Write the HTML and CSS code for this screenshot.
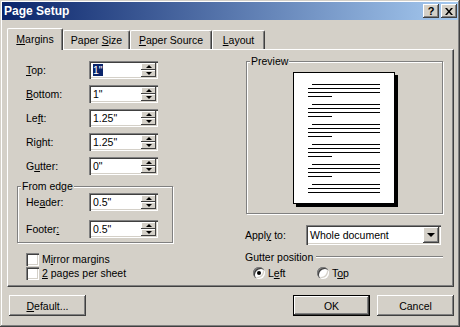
FILE: index.html
```html
<!DOCTYPE html>
<html lang="en">
<head>
  <meta charset="UTF-8">
  <title>Page Setup</title>
  <link rel="stylesheet" href="styles.css">
</head>
<body>
  <div class="window">
    <div class="titlebar">
      <span class="title">Page Setup</span>
      <div class="caption-btns">
        <span class="cbtn help">?</span>
        <span class="cbtn close">
          <svg width="8" height="7" viewBox="0 0 8 7"><path d="M0 0h2l2 2.5L6 0h2L5 3.5 8 7H6L4 4.5 2 7H0l3-3.5z" fill="#000"/></svg>
        </span>
      </div>
    </div>

    <div class="dialog">
      <div class="tabs">
        <div class="tab active"><u>M</u>argins</div>
        <div class="tab t2">Paper <u>S</u>ize</div>
        <div class="tab t3"><u>P</u>aper Source</div>
        <div class="tab t4"><u>L</u>ayout</div>
      </div>

      <div class="panel">
        <div class="col-left">
          <div class="fields">
            <div class="field"><label><u>T</u>op:</label><div class="spin-input"><span class="value"><span class="sel">1"</span></span><div class="spin"><span class="up"></span><span class="down"></span></div></div></div>
            <div class="field"><label><u>B</u>ottom:</label><div class="spin-input"><span class="value">1"</span><div class="spin"><span class="up"></span><span class="down"></span></div></div></div>
            <div class="field"><label>Le<u>f</u>t:</label><div class="spin-input"><span class="value">1.25"</span><div class="spin"><span class="up"></span><span class="down"></span></div></div></div>
            <div class="field"><label>Ri<u>g</u>ht:</label><div class="spin-input"><span class="value">1.25"</span><div class="spin"><span class="up"></span><span class="down"></span></div></div></div>
            <div class="field"><label>G<u>u</u>tter:</label><div class="spin-input"><span class="value">0"</span><div class="spin"><span class="up"></span><span class="down"></span></div></div></div>
          </div>

          <div class="group edge">
            <span class="legend">From edge</span>
            <div class="field"><label>He<u>a</u>der:</label><div class="spin-input"><span class="value">0.5"</span><div class="spin"><span class="up"></span><span class="down"></span></div></div></div>
            <div class="field"><label>Footer<u>:</u></label><div class="spin-input"><span class="value">0.5"</span><div class="spin"><span class="up"></span><span class="down"></span></div></div></div>
          </div>

          <div class="checks">
            <div class="check"><span class="box"></span><span>M<u>i</u>rror margins</span></div>
            <div class="check"><span class="box"></span><span><u>2</u> pages per sheet</span></div>
          </div>
        </div>

        <div class="col-right">
          <div class="group preview">
            <span class="legend">Preview</span>
            <div class="page">
              <div class="para"><div class="ln first"></div><div class="ln"></div><div class="ln"></div><div class="ln short"></div></div>
              <div class="para"><div class="ln first"></div><div class="ln"></div><div class="ln"></div><div class="ln short"></div></div>
              <div class="para"><div class="ln first"></div><div class="ln"></div><div class="ln"></div><div class="ln short"></div></div>
              <div class="para"><div class="ln first"></div><div class="ln"></div><div class="ln"></div><div class="ln short"></div></div>
              <div class="para"><div class="ln first"></div><div class="ln"></div><div class="ln"></div><div class="ln short"></div></div>
              <div class="para"><div class="ln first"></div><div class="ln"></div><div class="ln"></div></div>
            </div>
          </div>

          <div class="apply">
            <label>Appl<u>y</u> to:</label>
            <div class="combo"><span class="combo-text">Whole document</span><span class="drop"></span></div>
          </div>

          <div class="gutter-pos">
            <div class="sep-title"><span>Gutter position</span><span class="sep-line"></span></div>
            <div class="radios">
              <div class="radio"><span class="dot on"></span><span>L<u>e</u>ft</span></div>
              <div class="radio"><span class="dot"></span><span>T<u>o</u>p</span></div>
            </div>
          </div>
        </div>
      </div>

      <div class="footer">
        <div class="btn"><span><u>D</u>efault...</span></div>
        <div class="btn ok">OK</div>
        <div class="btn">Cancel</div>
      </div>
    </div>
  </div>
</body>
</html>
```

FILE: styles.css
```css
* { box-sizing: border-box; }
body { margin: 0; background: #d4d0c8; font-family: "Liberation Sans", Arial, sans-serif; font-size: 10.5px; color: #000; }
u { text-decoration: underline; text-underline-offset: 1px; }

.window { width: 460px; height: 327px; padding: 2px; background: #d4d0c8; box-shadow: inset -1px -1px #404040, inset 1px 1px #d4d0c8, inset -2px -2px #808080, inset 2px 2px #fff; }

.titlebar { height: 18px; display: flex; align-items: center; justify-content: space-between; padding: 0 1px 0 2px; background: linear-gradient(to right, #0a246a, #a6caf0); color: #fff; font-weight: bold; font-size: 12px; }
.caption-btns { display: flex; gap: 2px; }
.cbtn { width: 16px; height: 14px; display: flex; align-items: center; justify-content: center; background: #d4d0c8; color: #000; font-size: 11px; font-weight: bold; box-shadow: inset -1px -1px #404040, inset 1px 1px #fff, inset -2px -2px #808080; }

.dialog { padding: 8px 4px 0 5px; }

.tabs { display: flex; align-items: flex-end; height: 21px; }
.tab { height: 19px; padding-top: 3px; text-align: center; border: 1px solid; border-color: #fff #404040 transparent #fff; border-bottom: 0; border-radius: 2px 2px 0 0; box-shadow: inset -1px 0 #808080; }
.tab.active { position: relative; z-index: 1; width: 56px; height: 22px; margin-bottom: -1px; background: #d4d0c8; padding-top: 4px; }
.t2 { width: 67px; }
.t3 { width: 82px; }
.t4 { width: 53px; }

.panel { height: 238px; display: flex; padding: 11px 10px 0 9px; border: 1px solid; border-color: #fff #404040 #404040 #fff; box-shadow: inset -1px -1px #808080; }

.col-left { width: 156px; }
.fields { display: flex; flex-direction: column; gap: 6px; padding-left: 9px; }
.field { display: flex; align-items: center; height: 18px; }
.field label { width: 63px; }

.spin-input { width: 69px; height: 18px; display: flex; align-items: center; padding: 2px; background: #fff; box-shadow: inset 1px 1px #808080, inset 2px 2px #404040, inset -1px -1px #fff, inset -2px -2px #d4d0c8; }
.value { flex: 1; padding-left: 2px; }
.sel { background: #0a246a; color: #fff; }
.spin { width: 15px; height: 14px; display: flex; flex-direction: column; }
.spin span { flex: 1; display: flex; align-items: center; justify-content: center; background: #d4d0c8; box-shadow: inset -1px -1px #404040, inset 1px 1px #fff; }
.spin .up::after { content: ""; border: 3px solid transparent; border-top: 0; border-bottom: 3px solid #000; }
.spin .down::after { content: ""; border: 3px solid transparent; border-bottom: 0; border-top: 3px solid #000; }

.group { position: relative; border: 1px solid #808080; box-shadow: inset 1px 1px #fff, 1px 1px #fff; }
.legend { position: absolute; top: -7px; left: 3px; padding: 0 1px; background: #d4d0c8; line-height: 12px; }

.edge { margin-top: 11px; padding: 6px 0 4px 8px; display: flex; flex-direction: column; gap: 9px; }

.checks { margin-top: 9px; padding-left: 9px; }
.check { display: flex; align-items: center; height: 14px; }
.box { width: 13px; height: 13px; margin-right: 3px; background: #fff; box-shadow: inset 1px 1px #808080, inset 2px 2px #404040, inset -1px -1px #fff, inset -2px -2px #d4d0c8; }

.col-right { width: 198px; margin-left: auto; }
.preview { margin-left: 1px; height: 153px; padding-top: 10px; }
.page { width: 102px; height: 132px; margin-left: 46px; padding: 11px 0 0 14px; background: #fff; border: 1px solid #000; box-shadow: 3px 3px 0 #000; }
.para { margin-bottom: 7px; }
.ln { width: 72px; height: 1px; background: #000; margin-bottom: 3px; }
.ln:last-child { margin-bottom: 0; }
.ln.first { width: 68px; margin-left: 4px; }
.ln.short { width: 24px; }

.apply { display: flex; align-items: center; margin-top: 11px; }
.apply label { width: 61px; }
.combo { width: 135px; height: 20px; display: flex; align-items: center; padding: 2px; background: #fff; box-shadow: inset 1px 1px #808080, inset 2px 2px #404040, inset -1px -1px #fff, inset -2px -2px #d4d0c8; }
.combo-text { flex: 1; padding-left: 2px; }
.drop { width: 16px; height: 16px; display: flex; align-items: center; justify-content: center; background: #d4d0c8; box-shadow: inset -1px -1px #404040, inset 1px 1px #fff, inset -2px -2px #808080; }
.drop::after { content: ""; border: 4px solid transparent; border-bottom: 0; border-top: 4px solid #000; }

.gutter-pos { margin-top: 5px; }
.sep-title { display: flex; align-items: center; height: 14px; }
.sep-line { flex: 1; height: 2px; margin-left: 3px; border-top: 1px solid #808080; border-bottom: 1px solid #fff; }
.radios { display: flex; margin-top: 2px; padding-left: 8px; }
.radio { display: flex; align-items: center; width: 64px; height: 14px; }
.dot { width: 12px; height: 12px; margin-right: 3px; border-radius: 50%; background: #fff; display: flex; align-items: center; justify-content: center; box-shadow: inset 1px 1px #808080, inset 2px 2px #404040, inset -1px -1px #fff, inset -2px -2px #d4d0c8; }
.dot.on::after { content: ""; width: 4px; height: 4px; border-radius: 50%; background: #000; }

.footer { display: flex; margin-top: 8px; padding-left: 2px; }
.btn { width: 77px; height: 21px; display: flex; align-items: center; justify-content: center; background: #d4d0c8; box-shadow: inset -1px -1px #404040, inset 1px 1px #fff, inset -2px -2px #808080; }
.btn.ok { margin-left: auto; box-shadow: inset 0 0 0 1px #000, inset -2px -2px #404040, inset 2px 2px #fff, inset -3px -3px #808080; }
.btn + .btn:last-child { margin-left: 7px; }
```
